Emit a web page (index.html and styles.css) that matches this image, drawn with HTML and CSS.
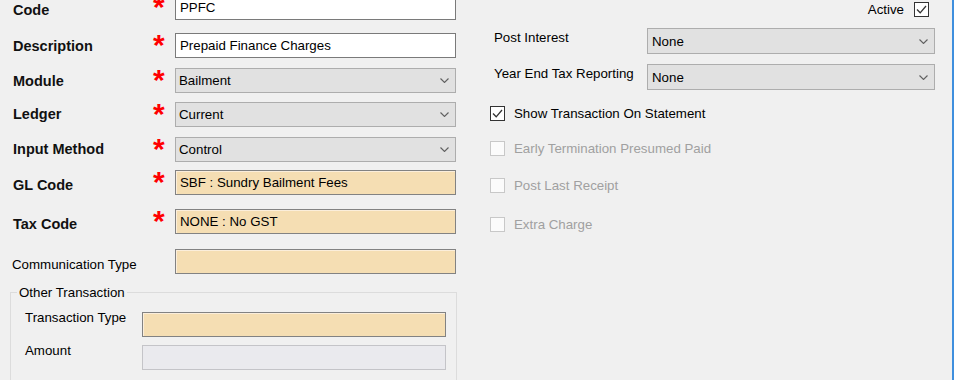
FILE: index.html
```html
<!DOCTYPE html>
<html>
<head>
<meta charset="utf-8">
<link rel="stylesheet" href="styles.css">
</head>
<body>
<div class="page">
  <div class="col-left">
    <div class="row mt-first"><span class="lbl drop">Code</span><span class="req">*</span><div class="box white">PPFC</div></div>
    <div class="row mt13"><span class="lbl nudge">Description</span><span class="req">*</span><div class="box white">Prepaid Finance Charges</div></div>
    <div class="row mt10"><span class="lbl nudge">Module</span><span class="req">*</span><div class="box select"><span>Bailment</span><svg class="chev" width="9" height="5" viewBox="0 0 9 5"><polyline points="0.5,0.5 4.5,4.5 8.5,0.5"/></svg></div></div>
    <div class="row mt9"><span class="lbl">Ledger</span><span class="req">*</span><div class="box select"><span>Current</span><svg class="chev" width="9" height="5" viewBox="0 0 9 5"><polyline points="0.5,0.5 4.5,4.5 8.5,0.5"/></svg></div></div>
    <div class="row mt10"><span class="lbl">Input Method</span><span class="req">*</span><div class="box select"><span>Control</span><svg class="chev" width="9" height="5" viewBox="0 0 9 5"><polyline points="0.5,0.5 4.5,4.5 8.5,0.5"/></svg></div></div>
    <div class="row mt8"><span class="lbl drop">GL Code</span><span class="req">*</span><div class="box tan">SBF : Sundry Bailment Fees</div></div>
    <div class="row mt14"><span class="lbl drop">Tax Code</span><span class="req">*</span><div class="box tan">NONE : No GST</div></div>
    <div class="row mt15"><span class="lbl-plain drop">Communication Type</span><span></span><div class="box tan"></div></div>
    <fieldset class="group">
      <legend>Other Transaction</legend>
      <div class="grow first"><span class="glbl">Transaction Type</span><div class="box tan"></div></div>
      <div class="grow"><span class="glbl">Amount</span><div class="box disabled"></div></div>
    </fieldset>
  </div>
  <div class="col-right">
    <div class="active-row"><span>Active</span><span class="cb on"><svg width="13" height="13" viewBox="0 0 13 13"><polyline points="2,6.5 5.2,9.8 11,3"/></svg></span></div>
    <div class="field-row mt11"><span class="flbl">Post Interest</span><div class="box select tall"><span>None</span><svg class="chev" width="9" height="5" viewBox="0 0 9 5"><polyline points="0.5,0.5 4.5,4.5 8.5,0.5"/></svg></div></div>
    <div class="field-row mt10"><span class="flbl">Year End Tax Reporting</span><div class="box select tall"><span>None</span><svg class="chev" width="9" height="5" viewBox="0 0 9 5"><polyline points="0.5,0.5 4.5,4.5 8.5,0.5"/></svg></div></div>
    <div class="check-row mt16"><span class="cb on"><svg width="13" height="13" viewBox="0 0 13 13"><polyline points="2,6.5 5.2,9.8 11,3"/></svg></span><span>Show Transaction On Statement</span></div>
    <div class="check-row off mt20"><span class="cb"></span><span>Early Termination Presumed Paid</span></div>
    <div class="check-row off mt22"><span class="cb"></span><span>Post Last Receipt</span></div>
    <div class="check-row off mt24"><span class="cb"></span><span>Extra Charge</span></div>
  </div>
</div>
</body>
</html>
```

FILE: styles.css
```css
html, body {
  margin: 0;
  padding: 0;
  background: #f0f0f0;
}
body {
  font-family: "Liberation Sans", Arial, sans-serif;
  font-size: 13.3px;
  color: #000;
  overflow: hidden;
}
.page {
  display: flex;
  width: 954px;
  height: 380px;
  box-sizing: border-box;
  border-right: 2px solid #3f8fde;
  overflow: hidden;
}
.col-left {
  width: 456px;
  display: flex;
  flex-direction: column;
  flex: none;
}
.row {
  display: grid;
  grid-template-columns: 140px 22px 281px;
  height: 25px;
  padding-left: 13px;
  align-items: center;
}
.mt-first { margin-top: -5px; }
.mt8 { margin-top: 8px; }
.mt9 { margin-top: 9px; }
.mt10 { margin-top: 10px; }
.mt11 { margin-top: 11px; }
.mt13 { margin-top: 13px; }
.mt14 { margin-top: 14px; }
.mt15 { margin-top: 15px; }
.mt16 { margin-top: 16px; }
.mt20 { margin-top: 20px; }
.mt22 { margin-top: 22px; }
.mt24 { margin-top: 24px; }

.lbl {
  font-weight: bold;
  font-size: 14.5px;
  line-height: 17px;
  color: #111;
}
.lbl-plain {
  line-height: 15px;
  margin-left: -1px;
}
.drop { margin-top: 5px; }
.nudge { margin-top: 2px; }
.req {
  align-self: start;
  color: #ff0000;
  font-weight: bold;
  font-size: 30px;
  line-height: 30px;
  height: 25px;
  margin-top: -3px;
  overflow: visible;
}
.box {
  box-sizing: border-box;
  height: 25px;
  border: 1px solid #7a7a7a;
  padding: 0 4px;
  display: flex;
  align-items: center;
  line-height: 15px;
  white-space: nowrap;
}
.white { background: #fff; }
.tan {
  background: #f5deb3;
  border-color: #828282;
  box-shadow: inset 1px 1px 0 #fbeedb;
}
.select {
  background: #e1e1e1;
  border-color: #adadad;
  justify-content: space-between;
  padding: 0 6px 0 3px;
}
.select.tall { height: 26px; padding-left: 4px; }
.chev {
  fill: none;
  stroke: #606060;
  stroke-width: 1.1;
}
.disabled {
  background: #eaeaee;
  border-color: #c4c4c8;
}

.group {
  margin: 11px 0 0 10px;
  padding: 0;
  width: 447px;
  box-sizing: border-box;
  min-height: 120px;
  border: 1px solid #dcdcdc;
}
.group legend {
  margin-left: 6px;
  padding: 0 2px;
  line-height: 15px;
}
.grow {
  display: grid;
  grid-template-columns: 117px 304px;
  padding-left: 14px;
  align-items: start;
  margin-top: 8px;
}
.grow.first { margin-top: 12px; }
.glbl {
  line-height: 15px;
  margin-top: -2px;
}

.col-right {
  margin-left: 34px;
  width: 445px;
  display: flex;
  flex-direction: column;
  flex: none;
}
.active-row {
  display: flex;
  justify-content: flex-end;
  align-items: center;
  gap: 10px;
  height: 15px;
  margin-top: 2px;
  padding-right: 6px;
}
.field-row {
  display: grid;
  grid-template-columns: 153px 288px;
  padding-left: 4px;
  align-items: start;
}
.flbl {
  line-height: 15px;
  margin-top: 2px;
}
.check-row {
  display: flex;
  align-items: center;
  gap: 9px;
  height: 15px;
}
.check-row.off { color: #a0a0a0; }
.cb {
  box-sizing: border-box;
  width: 15px;
  height: 15px;
  border: 1px solid #333;
  background: #fff;
  display: flex;
  align-items: center;
  justify-content: center;
  flex: none;
}
.check-row.off .cb {
  border-color: #c8c8c8;
  background: #fbfbfb;
}
.cb svg {
  fill: none;
  stroke: #333;
  stroke-width: 1.3;
}
```
